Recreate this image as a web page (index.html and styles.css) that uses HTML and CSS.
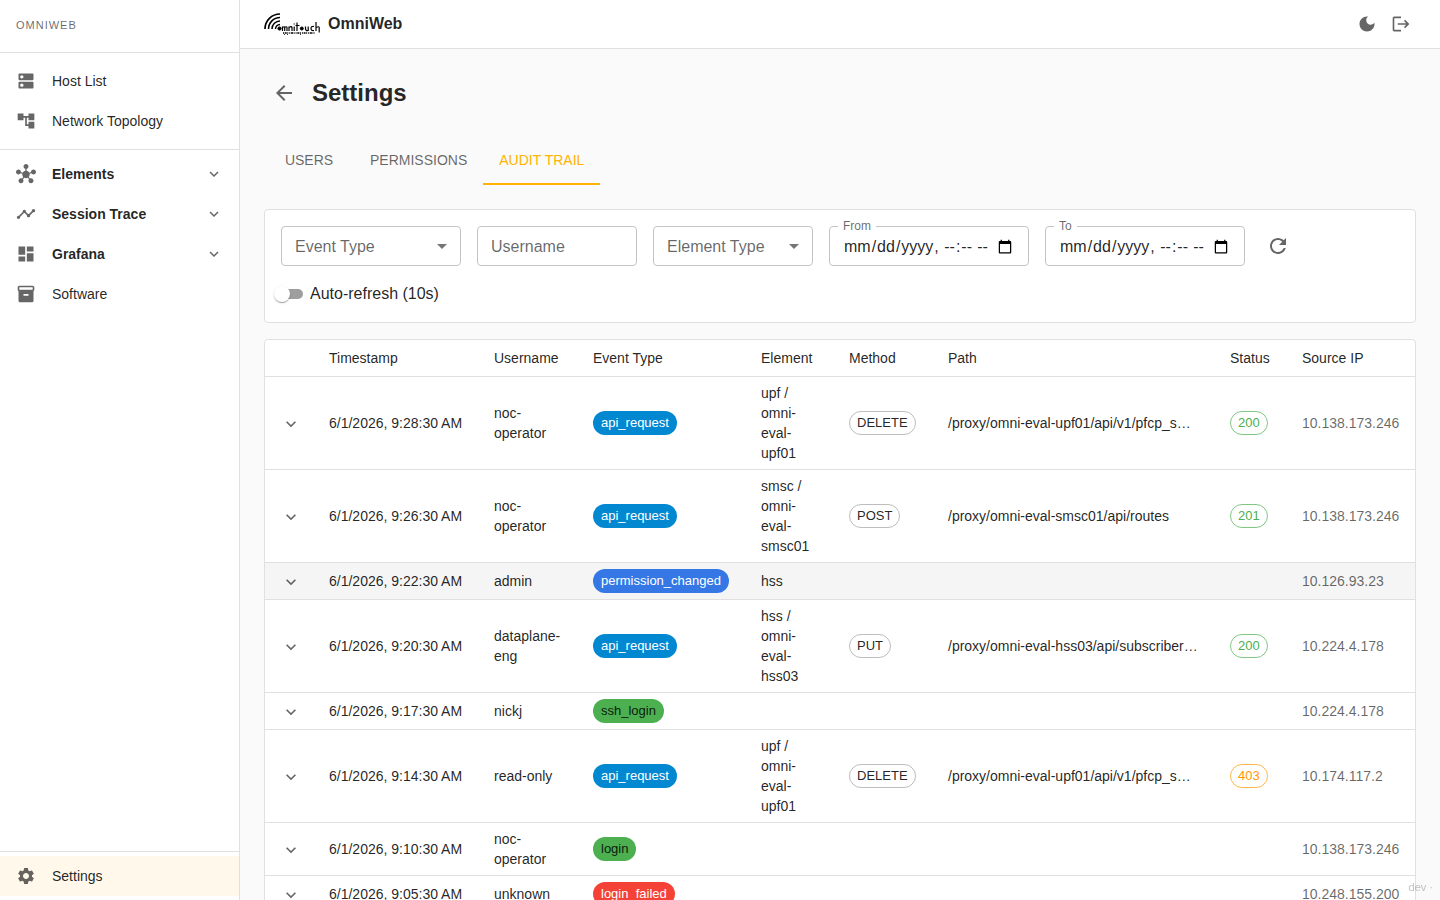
FILE: index.html
```html
<!DOCTYPE html>
<html lang="en">
<head>
<meta charset="utf-8">
<title>OmniWeb</title>
<link rel="stylesheet" href="styles.css">
</head>
<body>
<svg class="sprite" aria-hidden="true">
  <symbol id="chevron" viewBox="0 0 24 24"><path d="M7.41 8.59 12 13.17l4.59-4.58L18 10l-6 6-6-6z"/></symbol>
  <symbol id="drop" viewBox="0 0 24 24"><path d="m7 10 5 5 5-5z"/></symbol>
</svg>
<div class="app">
  <aside class="sidebar">
    <div class="sidebar-brand">OMNIWEB</div>
    <nav class="nav-main">
      <div class="nav-top">
        <a class="nav-item" href="#hosts">
          <svg class="icon" viewBox="0 0 24 24"><path d="M20 13H4c-.55 0-1 .45-1 1v6c0 .55.45 1 1 1h16c.55 0 1-.45 1-1v-6c0-.55-.45-1-1-1M7 19c-1.100 0-2-.9-2-2s.9-2 2-2 2 .9 2 2-.9 2-2 2M20 3H4c-.55 0-1 .45-1 1v6c0 .55.45 1 1 1h16c.55 0 1-.45 1-1V4c0-.55-.45-1-1-1M7 9c-1.100 0-2-.9-2-2s.9-2 2-2 2 .9 2 2-.9 2-2 2"/></svg>
          <span>Host List</span>
        </a>
        <a class="nav-item" href="#topology">
          <svg class="icon" viewBox="0 0 24 24"><path d="M22 11V3h-7v3H9V3H2v8h7V8h2v10h4v3h7v-8h-7v3h-2V8h2v3z"/></svg>
          <span>Network Topology</span>
        </a>
      </div>
      <div class="nav-groups">
        <button class="nav-item nav-group" type="button">
          <svg class="icon" viewBox="0 0 24 24"><path d="M8.400 18.200c.38.5.6 1.120.6 1.800 0 1.660-1.340 3-3 3s-3-1.340-3-3 1.340-3 3-3c.44 0 .85.09 1.230.26l1.410-1.770c-.92-1.030-1.290-2.390-1.090-3.690l-2.030-.68c-.54.83-1.460 1.380-2.520 1.380-1.660 0-3-1.340-3-3s1.340-3 3-3 3 1.340 3 3c0 .07 0 .14-.01.21l2.030.68c.64-1.210 1.820-2.090 3.220-2.320V5.910C9.960 5.570 9 4.400 9 3c0-1.660 1.340-3 3-3s3 1.340 3 3c0 1.400-.96 2.570-2.250 2.910v2.160c1.400.23 2.580 1.110 3.220 2.320l2.030-.68c-.01-.07-.01-.14-.01-.21 0-1.660 1.340-3 3-3s3 1.340 3 3-1.340 3-3 3c-1.060 0-1.980-.55-2.520-1.370l-2.030.68c.2 1.290-.16 2.650-1.090 3.690l1.410 1.770c.39-.18.8-.27 1.240-.27 1.660 0 3 1.340 3 3s-1.340 3-3 3-3-1.340-3-3c0-.68.22-1.300.6-1.800l-1.410-1.770c-1.350.75-3.010.76-4.370 0z"/></svg>
          <span>Elements</span>
          <svg class="nav-chevron"><use href="#chevron"/></svg>
        </button>
        <button class="nav-item nav-group" type="button">
          <svg class="icon" viewBox="0 0 24 24"><path d="M23 8c0 1.100-.9 2-2 2-.18 0-.35-.02-.51-.07l-3.560 3.550c.05.16.07.34.07.52 0 1.100-.9 2-2 2s-2-.9-2-2c0-.18.02-.36.07-.52l-2.550-2.550c-.16.05-.34.07-.52.07s-.36-.02-.52-.07l-4.550 4.560c.05.16.07.33.07.51 0 1.100-.9 2-2 2s-2-.9-2-2 .9-2 2-2c.18 0 .35.02.51.07l4.560-4.550C8.020 9.360 8 9.180 8 9c0-1.100.9-2 2-2s2 .9 2 2c0 .18-.02.36-.07.52l2.550 2.550c.16-.05.34-.07.52-.07s.36.02.52.07l3.550-3.560C19.020 8.350 19 8.180 19 8c0-1.100.9-2 2-2s2 .9 2 2"/></svg>
          <span>Session Trace</span>
          <svg class="nav-chevron"><use href="#chevron"/></svg>
        </button>
        <button class="nav-item nav-group" type="button">
          <svg class="icon" viewBox="0 0 24 24"><path d="M3 13h8V3H3zm0 8h8v-6H3zm10 0h8V11h-8zm0-18v6h8V3z"/></svg>
          <span>Grafana</span>
          <svg class="nav-chevron"><use href="#chevron"/></svg>
        </button>
        <a class="nav-item" href="#software">
          <svg class="icon" viewBox="0 0 24 24"><path d="M20 2H4c-1 0-2 .9-2 2v3.010c0 .72.43 1.340 1 1.690V20c0 1.100 1.100 2 2 2h14c.9 0 2-.9 2-2V8.700c.57-.35 1-.97 1-1.690V4c0-1.100-1-2-2-2m-5 12H9v-2h6zm5-7H4V4h16z"/></svg>
          <span>Software</span>
        </a>
      </div>
    </nav>
    <div class="nav-bottom">
      <a class="nav-item nav-active" href="#settings">
        <svg class="icon" viewBox="0 0 24 24"><path d="M19.140 12.940c.04-.3.06-.61.06-.94 0-.32-.02-.64-.07-.94l2.030-1.580c.18-.14.23-.41.12-.61l-1.920-3.320c-.12-.22-.37-.29-.59-.22l-2.390.96c-.5-.38-1.030-.7-1.620-.94l-.36-2.540c-.04-.24-.24-.41-.48-.41h-3.840c-.24 0-.43.17-.47.41l-.36 2.540c-.59.24-1.130.57-1.620.94l-2.390-.96c-.22-.08-.47 0-.59.22L2.740 8.870c-.12.21-.08.47.12.61l2.030 1.580c-.05.3-.09.63-.09.94s.02.64.07.94l-2.030 1.580c-.18.14-.23.41-.12.61l1.920 3.320c.12.22.37.29.59.22l2.390-.96c.5.38 1.030.7 1.620.94l.36 2.540c.05.24.24.41.48.41h3.840c.24 0 .44-.17.47-.41l.36-2.540c.59-.24 1.130-.56 1.620-.94l2.390.96c.22.08.47 0 .59-.22l1.920-3.320c.12-.22.07-.47-.12-.61zM12 15.600c-1.980 0-3.600-1.620-3.600-3.600s1.620-3.600 3.600-3.600 3.600 1.620 3.600 3.600-1.620 3.600-3.600 3.600"/></svg>
        <span>Settings</span>
      </a>
    </div>
  </aside>

  <div class="page">
    <header class="topbar">
      <svg class="logo" viewBox="0 0 56 24" role="img" aria-label="omnitouch">
        <g fill="none" stroke="#000">
          <path d="M1 17A15 15 0 0 1 16 2" stroke-width="1.700"/>
          <path d="M4.500 17A11.500 11.500 0 0 1 16 5.500" stroke-width="1.600"/>
          <path d="M8 17A8 8 0 0 1 16 9" stroke-width="1.500"/>
          <path d="M11.500 17A4.500 4.500 0 0 1 16 12.500" stroke-width="1.400"/>
          <circle cx="15.500" cy="16.500" r="1.600" fill="#000"/>
          <path d="M18.500 19v-4.500M18.500 15.500q2-1.500 2.200 0V19M20.700 15.500q2-1.500 2.300 0V19M25 19v-4.500M25 15.500q2.500-1.800 3 0V19M30.200 19v-4.500M30.200 12.500v-1M33 19v-8.500M31.500 13.500h4M41.500 14.500V17q.2 2 2.700 1.500V14.500v4.500M50 14.500q-3-.5-3 2t3 2M52 19V10M52 15.500q3-1.500 3.200 0V20.500" stroke-width="1.200"/>
          <circle cx="37.800" cy="16.500" r="1.500" fill="#000"/>
          <path d="M19 21h32" stroke-width="1.300" stroke-dasharray="1 .7 2 .6 1 1"/>
          <path d="M20 22.500h5M36 22.500h2" stroke-width=".8" stroke-dasharray="1 2"/>
        </g>
      </svg>
      <span class="app-name">OmniWeb</span>
      <div class="topbar-actions">
        <button class="icon-button" type="button" aria-label="Dark mode">
          <svg class="icon" viewBox="0 0 24 24"><path d="M12 3c-4.970 0-9 4.030-9 9s4.030 9 9 9 9-4.030 9-9c0-.46-.04-.92-.1-1.360-.98 1.370-2.580 2.260-4.400 2.260-2.980 0-5.400-2.420-5.400-5.400 0-1.810.89-3.420 2.260-4.400-.44-.06-.9-.1-1.360-.1"/></svg>
        </button>
        <button class="icon-button" type="button" aria-label="Log out">
          <svg class="icon" viewBox="0 0 24 24"><path d="m17 7-1.410 1.410L18.170 11H8v2h10.170l-2.580 2.580L17 17l5-5zM4 5h8V3H4c-1.100 0-2 .9-2 2v14c0 1.100.9 2 2 2h8v-2H4z"/></svg>
        </button>
      </div>
    </header>

    <main class="content">
      <div class="title-row">
        <button class="back-button" type="button" aria-label="Back">
          <svg class="icon-lg" viewBox="0 0 24 24"><path d="M20 11H7.830l5.590-5.590L12 4l-8 8 8 8 1.410-1.410L7.830 13H20z"/></svg>
        </button>
        <h1>Settings</h1>
      </div>

      <div class="tabs" role="tablist">
        <button class="tab" type="button" role="tab">USERS</button>
        <button class="tab" type="button" role="tab">PERMISSIONS</button>
        <button class="tab tab-active" type="button" role="tab" aria-selected="true">AUDIT TRAIL</button>
      </div>

      <form class="card filters">
        <div class="field field-md">
          <select class="control" aria-label="Event Type"><option>Event Type</option></select>
          <svg class="drop"><use href="#drop"/></svg>
        </div>
        <div class="field field-sm">
          <input class="control" type="text" placeholder="Username" aria-label="Username">
        </div>
        <div class="field field-sm">
          <select class="control" aria-label="Element Type"><option>Element Type</option></select>
          <svg class="drop"><use href="#drop"/></svg>
        </div>
        <div class="field field-lg">
          <label class="notch" for="from">From</label>
          <input class="control control-date" id="from" type="datetime-local">
        </div>
        <div class="field field-lg">
          <label class="notch" for="to">To</label>
          <input class="control control-date" id="to" type="datetime-local">
        </div>
        <button class="icon-button" type="button" aria-label="Refresh">
          <svg class="icon-lg" viewBox="0 0 24 24"><path d="M17.650 6.350C16.200 4.900 14.210 4 12 4c-4.420 0-7.990 3.580-7.990 8s3.570 8 7.990 8c3.730 0 6.840-2.550 7.730-6h-2.080c-.82 2.330-3.040 4-5.650 4-3.310 0-6-2.690-6-6s2.690-6 6-6c1.660 0 3.140.69 4.220 1.780L13 11h7V4z"/></svg>
        </button>
        <label class="switch-row">
          <input class="switch" type="checkbox" role="switch">
          <span>Auto-refresh (10s)</span>
        </label>
      </form>

      <div class="card table-card">
        <table>
          <colgroup>
            <col class="c-toggle"><col class="c-time"><col class="c-user"><col class="c-event"><col class="c-element"><col class="c-method"><col class="c-path"><col class="c-status"><col class="c-ip">
          </colgroup>
          <thead>
            <tr><th></th><th>Timestamp</th><th>Username</th><th>Event Type</th><th>Element</th><th>Method</th><th>Path</th><th>Status</th><th>Source IP</th></tr>
          </thead>
          <tbody>
            <tr>
              <td class="toggle"><button type="button" aria-label="Expand"><svg class="icon"><use href="#chevron"/></svg></button></td>
              <td class="time">6/1/2026, 9:28:30 AM</td><td>noc-operator</td>
              <td><span class="chip chip-info">api_request</span></td>
              <td>upf / omni-eval-upf01</td>
              <td><span class="chip chip-outline">DELETE</span></td>
              <td class="path">/proxy/omni-eval-upf01/api/v1/pfcp_sessions</td>
              <td><span class="chip chip-ok">200</span></td>
              <td class="ip">10.138.173.246</td>
            </tr>
            <tr>
              <td class="toggle"><button type="button" aria-label="Expand"><svg class="icon"><use href="#chevron"/></svg></button></td>
              <td class="time">6/1/2026, 9:26:30 AM</td><td>noc-operator</td>
              <td><span class="chip chip-info">api_request</span></td>
              <td>smsc / omni-eval-smsc01</td>
              <td><span class="chip chip-outline">POST</span></td>
              <td class="path">/proxy/omni-eval-smsc01/api/routes</td>
              <td><span class="chip chip-ok">201</span></td>
              <td class="ip">10.138.173.246</td>
            </tr>
            <tr class="highlight">
              <td class="toggle"><button type="button" aria-label="Expand"><svg class="icon"><use href="#chevron"/></svg></button></td>
              <td class="time">6/1/2026, 9:22:30 AM</td><td>admin</td>
              <td><span class="chip chip-primary">permission_changed</span></td>
              <td>hss</td><td></td><td></td><td></td>
              <td class="ip">10.126.93.23</td>
            </tr>
            <tr>
              <td class="toggle"><button type="button" aria-label="Expand"><svg class="icon"><use href="#chevron"/></svg></button></td>
              <td class="time">6/1/2026, 9:20:30 AM</td><td>dataplane-eng</td>
              <td><span class="chip chip-info">api_request</span></td>
              <td>hss / omni-eval-hss03</td>
              <td><span class="chip chip-outline">PUT</span></td>
              <td class="path">/proxy/omni-eval-hss03/api/subscribers/profile</td>
              <td><span class="chip chip-ok">200</span></td>
              <td class="ip">10.224.4.178</td>
            </tr>
            <tr>
              <td class="toggle"><button type="button" aria-label="Expand"><svg class="icon"><use href="#chevron"/></svg></button></td>
              <td class="time">6/1/2026, 9:17:30 AM</td><td>nickj</td>
              <td><span class="chip chip-success">ssh_login</span></td>
              <td></td><td></td><td></td><td></td>
              <td class="ip">10.224.4.178</td>
            </tr>
            <tr>
              <td class="toggle"><button type="button" aria-label="Expand"><svg class="icon"><use href="#chevron"/></svg></button></td>
              <td class="time">6/1/2026, 9:14:30 AM</td><td>read-only</td>
              <td><span class="chip chip-info">api_request</span></td>
              <td>upf / omni-eval-upf01</td>
              <td><span class="chip chip-outline">DELETE</span></td>
              <td class="path">/proxy/omni-eval-upf01/api/v1/pfcp_sessions</td>
              <td><span class="chip chip-warn">403</span></td>
              <td class="ip">10.174.117.2</td>
            </tr>
            <tr>
              <td class="toggle"><button type="button" aria-label="Expand"><svg class="icon"><use href="#chevron"/></svg></button></td>
              <td class="time">6/1/2026, 9:10:30 AM</td><td>noc-operator</td>
              <td><span class="chip chip-success">login</span></td>
              <td></td><td></td><td></td><td></td>
              <td class="ip">10.138.173.246</td>
            </tr>
            <tr>
              <td class="toggle"><button type="button" aria-label="Expand"><svg class="icon"><use href="#chevron"/></svg></button></td>
              <td class="time">6/1/2026, 9:05:30 AM</td><td>unknown</td>
              <td><span class="chip chip-error">login_failed</span></td>
              <td></td><td></td><td></td><td></td>
              <td class="ip">10.248.155.200</td>
            </tr>
          </tbody>
        </table>
      </div>
    </main>
  </div>
</div>
<div class="build-tag">dev ·</div>
</body>
</html>
```
FILE: styles.css
```css
:root {
  --text: rgba(0, 0, 0, .87);
  --muted: rgba(0, 0, 0, .6);
  --line: #e0e0e0;
  --accent: #ffb300;
}

* { box-sizing: border-box; }

body {
  margin: 0;
  background: #fafafa;
  color: var(--text);
  font: 14px/20px "Liberation Sans", Arial, sans-serif;
}

button, input, select { font: inherit; color: inherit; }

button {
  border: 0;
  padding: 0;
  background: none;
  cursor: pointer;
}

svg { display: block; flex: none; fill: currentColor; }
.sprite { display: none; }
.icon { width: 20px; height: 20px; }
.icon-lg { width: 24px; height: 24px; }

.app { display: flex; height: 100vh; }

/* Sidebar */
.sidebar {
  display: flex;
  flex-direction: column;
  flex: none;
  width: 240px;
  background: #fff;
  border-right: 1px solid var(--line);
}

.sidebar-brand {
  padding: 16px 16px 18px;
  border-bottom: 1px solid var(--line);
  color: var(--muted);
  font-size: 11px;
  line-height: 18px;
  letter-spacing: 1px;
}

.nav-main { flex: 1; }
.nav-top { padding: 8px 0; border-bottom: 1px solid var(--line); }
.nav-groups { padding: 4px 0; }
.nav-bottom { padding: 4px 0; border-top: 1px solid var(--line); }

.nav-item {
  display: flex;
  align-items: center;
  gap: 16px;
  width: 100%;
  height: 40px;
  padding: 0 16px;
  color: var(--text);
  text-align: left;
  text-decoration: none;
}

.nav-item svg { color: var(--muted); }
.nav-group { font-weight: 700; }
.nav-chevron { width: 18px; height: 18px; margin-left: auto; }
.nav-active { background: #fff8eb; }

/* Top bar */
.page {
  display: flex;
  flex-direction: column;
  flex: 1;
  min-width: 0;
}

.topbar {
  display: flex;
  align-items: center;
  flex: none;
  gap: 8px;
  height: 49px;
  padding: 0 24px;
  background: #fff;
  border-bottom: 1px solid var(--line);
}

.logo { width: 56px; height: 24px; }
.app-name { font-size: 16px; font-weight: 700; }

.topbar-actions {
  display: flex;
  gap: 4px;
  margin-left: auto;
}

.icon-button {
  padding: 5px;
  color: var(--muted);
}

/* Content */
.content {
  flex: 1;
  min-height: 0;
  padding: 24px;
  overflow-y: auto;
  scrollbar-width: none;
}

.title-row { display: flex; align-items: center; gap: 8px; }
.back-button { padding: 8px; color: var(--muted); }

h1 {
  margin: 0;
  font-size: 24px;
  line-height: 32px;
}

.tabs { display: flex; margin: 24px 0; }

.tab {
  min-width: 90px;
  height: 48px;
  padding: 0 16px;
  border-bottom: 2px solid transparent;
  color: var(--muted);
}

.tab-active { color: var(--accent); border-color: var(--accent); }

.card {
  background: #fff;
  border: 1px solid var(--line);
  border-radius: 4px;
}

/* Filters */
.filters {
  display: flex;
  flex-wrap: wrap;
  align-items: center;
  gap: 16px;
  margin-bottom: 16px;
  padding: 16px;
  font-size: 16px;
  line-height: 24px;
}

.field { position: relative; }
.field-sm { width: 160px; }
.field-md { width: 180px; }
.field-lg { width: 200px; }

.control {
  display: block;
  width: 100%;
  height: 40px;
  padding: 2px 13px 0;
  border: 1px solid #c4c4c4;
  border-radius: 4px;
  background: #fff;
  color: var(--muted);
  appearance: none;
}

.control::placeholder { color: var(--muted); opacity: 1; }
.control-date { color: var(--text); }

.drop {
  position: absolute;
  top: 8px;
  right: 7px;
  width: 24px;
  height: 24px;
  color: rgba(0, 0, 0, .54);
  pointer-events: none;
}

.notch {
  position: absolute;
  top: -8px;
  left: 9px;
  padding: 0 5px;
  background: #fff;
  color: var(--muted);
  font-size: 12px;
  line-height: 16px;
}

.switch-row {
  display: flex;
  align-items: center;
  gap: 7px;
  margin-left: -4px;
}

.switch {
  position: relative;
  width: 26px;
  height: 10px;
  margin: 0;
  border-radius: 5px;
  background: #9e9e9e;
  appearance: none;
}

.switch::before {
  content: "";
  position: absolute;
  top: -3px;
  left: -3px;
  width: 16px;
  height: 16px;
  border-radius: 50%;
  background: #fff;
  box-shadow: 0 2px 1px -1px rgba(0, 0, 0, .2), 0 1px 1px rgba(0, 0, 0, .14), 0 1px 3px rgba(0, 0, 0, .12);
}

/* Audit table */
.table-card { overflow: hidden; }

table {
  width: 100%;
  table-layout: fixed;
  border-collapse: separate;
  border-spacing: 0;
}

.c-toggle { width: 48px; }
.c-time { width: 165px; }
.c-user { width: 99px; }
.c-event { width: 168px; }
.c-element { width: 88px; }
.c-method { width: 99px; }
.c-path { width: 282px; }
.c-status { width: 72px; }
.c-ip { width: 129px; }

th, td {
  padding: 6px 16px;
  border-bottom: 1px solid var(--line);
  font-weight: 400;
  text-align: left;
  vertical-align: middle;
}

th { line-height: 24px; }
.highlight { background: #f5f5f5; }
.toggle { padding: 2px 0 0 11px; }
.toggle button { display: block; padding: 5px; color: var(--muted); }
.time { white-space: nowrap; }
.ip { color: var(--muted); }

.path {
  overflow: hidden;
  text-overflow: ellipsis;
  white-space: nowrap;
}

.chip {
  display: inline-block;
  height: 24px;
  padding: 0 8px;
  border-radius: 12px;
  color: #fff;
  font-size: 13px;
  line-height: 24px;
  vertical-align: middle;
  white-space: nowrap;
}

.chip-info { background: #0288d1; }
.chip-primary { background: #3578e5; }
.chip-success { background: #4caf50; color: var(--text); }
.chip-error { background: #f44336; }

.chip-outline, .chip-ok, .chip-warn {
  padding: 0 7px;
  border: 1px solid #bdbdbd;
  color: var(--text);
  line-height: 22px;
}

.chip-ok { border-color: rgba(76, 175, 80, .7); color: #4caf50; }
.chip-warn { border-color: rgba(255, 152, 0, .7); color: #ff9800; }

.build-tag {
  position: fixed;
  right: 7px;
  bottom: 5px;
  color: rgba(0, 0, 0, .25);
  font-size: 11px;
  line-height: 16px;
}
```
